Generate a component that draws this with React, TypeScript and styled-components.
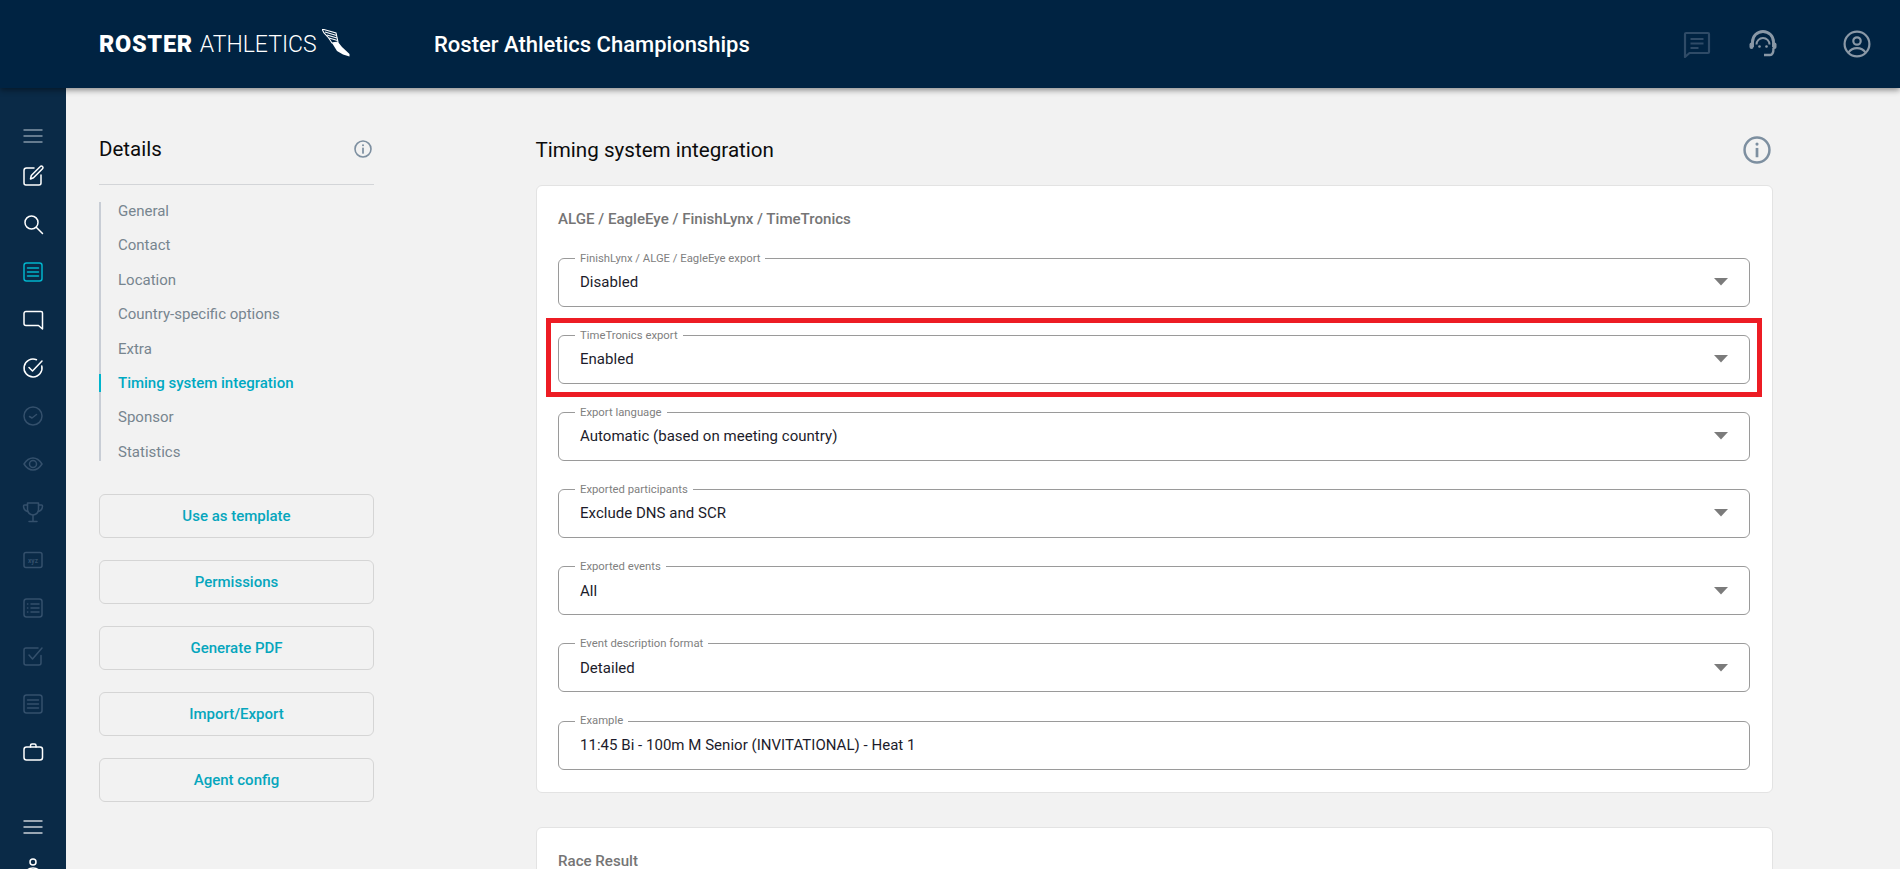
import React from 'react';
import styled, { createGlobalStyle } from 'styled-components';

const dimIcon = '#34506c';

const navItems = ['General', 'Contact', 'Location', 'Country-specific options', 'Extra', 'Timing system integration', 'Sponsor', 'Statistics'];
const sideButtons = ['Use as template', 'Permissions', 'Generate PDF', 'Import/Export', 'Agent config'];

const fields = [
  { label: 'FinishLynx / ALGE / EagleEye export', value: 'Disabled' },
  { label: 'TimeTronics export', value: 'Enabled', marked: true },
  { label: 'Export language', value: 'Automatic (based on meeting country)' },
  { label: 'Exported participants', value: 'Exclude DNS and SCR' },
  { label: 'Exported events', value: 'All' },
  { label: 'Event description format', value: 'Detailed' },
  { label: 'Example', value: '11:45 Bi - 100m M Senior (INVITATIONAL) - Heat 1', plain: true },
];

const Svg = ({ size = 24, children }: { size?: number; children: React.ReactNode }) => (
  <svg width={size} height={size} viewBox="0 0 24 24" fill="none" stroke="currentColor" strokeWidth="1.5" strokeLinecap="round" strokeLinejoin="round">
    {children}
  </svg>
);

const ListBox = () => (
  <Svg>
    <rect x="3" y="3" width="18" height="18" rx="2.5" />
    <path d="M6.5 8h11M6.5 12h11M6.5 16h11" />
  </Svg>
);

const sideIcons = [
  {
    key: 'edit',
    node: (
      <Svg>
        <path d="M13 4H5.5A2.5 2.5 0 0 0 3 6.500V19a2 2 0 0 0 2 2h13a2 2 0 0 0 2-2v-8" />
        <path d="M9.500 15l.8-3.500L19.300 2.500a1.500 1.500 0 0 1 2.200 0 1.500 1.500 0 0 1 0 2.200L12.500 13.800z" />
      </Svg>
    ),
  },
  {
    key: 'search',
    node: (
      <Svg>
        <circle cx="10.500" cy="10.500" r="6.500" />
        <path d="M15.500 15.500L21.500 21.500" />
      </Svg>
    ),
  },
  { key: 'list', active: true, node: <ListBox /> },
  {
    key: 'chat',
    node: (
      <Svg>
        <path d="M5 3.500h15a1.500 1.500 0 0 1 1.500 1.500v16l-4-3.500H5A2 2 0 0 1 3 15.500V5.500a2 2 0 0 1 2-2z" />
      </Svg>
    ),
  },
  {
    key: 'done',
    node: (
      <Svg>
        <path d="M20.800 10a9 9 0 1 1-5.300-6.300" />
        <path d="M8 11.500l3.500 3.500L21 5" />
      </Svg>
    ),
  },
  {
    key: 'time',
    dim: true,
    node: (
      <Svg>
        <circle cx="12" cy="12" r="9" />
        <path d="M8.500 12.500l2.500 1.500 4.500-3.500" />
      </Svg>
    ),
  },
  {
    key: 'eye',
    dim: true,
    node: (
      <Svg>
        <path d="M3 12c2.500-4 5.500-6 9-6s6.500 2 9 6c-2.500 4-5.500 6-9 6s-6.500-2-9-6z" />
        <circle cx="12" cy="12" r="3.500" />
      </Svg>
    ),
  },
  {
    key: 'trophy',
    dim: true,
    node: (
      <Svg>
        <path d="M6.500 3h11v6.500a5.500 5.500 0 0 1-11 0z" />
        <path d="M6.500 5H3.500a1 1 0 0 0-1 1c0 3 1.500 5 4.500 5.500M17.500 5h3a1 1 0 0 1 1 1c0 3-1.500 5-4.500 5.500" />
        <path d="M12 15v6M8 21.500h8" />
      </Svg>
    ),
  },
  {
    key: 'xyz',
    dim: true,
    node: (
      <Svg>
        <rect x="3" y="4.500" width="18" height="15" rx="2" />
        <text x="12" y="14.500" textAnchor="middle" fontSize="6.500" fontWeight="700" fontFamily="Roboto, sans-serif" fill="currentColor" stroke="none">xyz</text>
      </Svg>
    ),
  },
  {
    key: 'bullets',
    dim: true,
    node: (
      <Svg>
        <rect x="3" y="3" width="18" height="18" rx="2.500" />
        <path d="M10 8h8M10 12h8M10 16h8M6.500 8h.3M6.500 12h.3M6.500 16h.3" />
      </Svg>
    ),
  },
  {
    key: 'check',
    dim: true,
    node: (
      <Svg>
        <path d="M20 11.500V19a2 2 0 0 1-2 2H5a2 2 0 0 1-2-2V6a2 2 0 0 1 2-2h12" />
        <path d="M8 11l3.500 4L21 4" />
      </Svg>
    ),
  },
  { key: 'list2', dim: true, node: <ListBox /> },
  {
    key: 'case',
    node: (
      <Svg>
        <rect x="3" y="7" width="18.500" height="13" rx="2.500" />
        <path d="M9.500 7V5.500A1.500 1.500 0 0 1 11 4h2.500A1.500 1.500 0 0 1 15 5.500V7" />
      </Svg>
    ),
  },
];

const Burger = () => (
  <Svg>
    <path d="M2.500 6h19M2.500 12h19M2.500 18h19" strokeLinecap="butt" />
  </Svg>
);

const InfoIcon = ({ size }: { size: number }) => (
  <svg width={size} height={size} viewBox="0 0 27 27" fill="none">
    <circle cx="13.500" cy="13.500" r="12" stroke="currentColor" strokeWidth="2.400" />
    <rect x="12.200" y="11.500" width="2.600" height="9" fill="currentColor" />
    <circle cx="13.500" cy="7.800" r="1.500" fill="currentColor" />
  </svg>
);

const WingLogo = () => (
  <svg width="28" height="28" viewBox="0 0 28 28" fill="none">
    <path d="M0 0L14 4L16 13L10 14L6 8L2 4Z" stroke="#fff" strokeWidth="1.100" />
    <path d="M3 3L14.500 6.500M5 6L15 9M7 9L15.500 11.500" stroke="#fff" strokeWidth="1.100" />
    <path d="M10 14L16 13L20 18L27.500 25L27.500 27.500L21 25.500L15 22Z" fill="#fff" />
  </svg>
);

const Arrow = () => (
  <svg width="14" height="8" viewBox="0 0 14 8">
    <path d="M0 0h14L7 7.500z" fill="#7b7b7b" />
  </svg>
);

export default function App() {
  return (
    <>
      <GlobalStyle />
      <Page>
        <Header>
          <Logo>
            <LogoBold>ROSTER</LogoBold>
            <LogoLight>ATHLETICS</LogoLight>
            <WingLogo />
          </Logo>
          <MeetingName>Roster Athletics Championships</MeetingName>
          <HeaderIcons>
            <HeaderIcon $tone="#2f4b67" $gap={0}>
              <svg width="28" height="28" viewBox="0 0 28 28" fill="none" stroke="currentColor" strokeWidth="2.200">
                <path d="M3 3h22a1 1 0 0 1 1 1v18a1 1 0 0 1-1 1H6.500L2 27V4a1 1 0 0 1 1-1z" strokeLinejoin="round" />
                <path d="M7.500 9h13M7.500 13.500h13M7.500 18h8" />
              </svg>
            </HeaderIcon>
            <HeaderIcon $tone="#8a98a6" $gap={38}>
              <svg width="28" height="28" viewBox="0 0 28 28" fill="none" stroke="currentColor">
                <path d="M3.500 17v-5a10.500 10.500 0 0 1 21 0v5" strokeWidth="2.900" />
                <path d="M7.500 14.500a6.500 6.500 0 0 1 13 0" strokeWidth="2" />
                <rect x="0.500" y="12.500" width="4" height="6.500" rx="2" fill="currentColor" stroke="none" />
                <rect x="23.500" y="12.500" width="4" height="6.500" rx="2" fill="currentColor" stroke="none" />
                <path d="M24.500 18c0 5-1.500 7-3.500 7h-6" strokeWidth="2.400" />
                <circle cx="10.500" cy="16.500" r="1.300" fill="currentColor" stroke="none" />
                <circle cx="17.500" cy="16.500" r="1.300" fill="currentColor" stroke="none" />
              </svg>
            </HeaderIcon>
            <HeaderIcon $tone="#8a98a6" $gap={66}>
              <svg width="28" height="28" viewBox="0 0 28 28" fill="none" stroke="currentColor" strokeWidth="2.200">
                <circle cx="14" cy="14" r="12.400" />
                <circle cx="14" cy="11" r="3.700" />
                <path d="M5.500 22.500c2-3 5-4.300 8.500-4.300s6.500 1.300 8.500 4.300" />
              </svg>
            </HeaderIcon>
          </HeaderIcons>
        </Header>

        <Body>
          <Sidebar>
            <SideSlot $h={32} $tone="#8496a8">
              <Burger />
            </SideSlot>
            {sideIcons.map((icon) => (
              <SideSlot key={icon.key} $h={48} $tone={icon.active ? '#00b4cc' : icon.dim ? dimIcon : '#ffffff'}>
                {icon.node}
              </SideSlot>
            ))}
            <SideSpacer />
            <SideSlot $h={32} $tone="#c9d0d7">
              <Burger />
            </SideSlot>
            <SideSlot $h={48} $tone="#ffffff">
              <Svg>
                <circle cx="12" cy="7" r="3" />
                <path d="M5 20c0-5 3-7 7-7s7 2 7 7z" />
              </Svg>
            </SideSlot>
          </Sidebar>

          <Content>
            <DetailsColumn>
              <DetailsHead>
                <DetailsTitle>Details</DetailsTitle>
                <InfoWrap>
                  <InfoIcon size={18} />
                </InfoWrap>
              </DetailsHead>
              <DetailsNav>
                {navItems.map((item) => (
                  <NavItem key={item} $active={item === 'Timing system integration'}>
                    {item}
                  </NavItem>
                ))}
              </DetailsNav>
              <ButtonStack>
                {sideButtons.map((label) => (
                  <SideButton key={label}>{label}</SideButton>
                ))}
              </ButtonStack>
            </DetailsColumn>

            <MainColumn>
              <MainHead>
                <MainTitle>Timing system integration</MainTitle>
                <InfoWrap>
                  <InfoIcon size={28} />
                </InfoWrap>
              </MainHead>
              <Card>
                <CardHeading>ALGE / EagleEye / FinishLynx / TimeTronics</CardHeading>
                <FieldList>
                  {fields.map((field) => (
                    <FieldWrap key={field.label}>
                      <Field>
                        <FieldLabel>{field.label}</FieldLabel>
                        <FieldValue>{field.value}</FieldValue>
                        {!field.plain && <Arrow />}
                      </Field>
                      {field.marked && <RedMark />}
                    </FieldWrap>
                  ))}
                </FieldList>
              </Card>
              <NextCard>
                <CardHeading>Race Result</CardHeading>
              </NextCard>
            </MainColumn>
          </Content>
        </Body>
      </Page>
    </>
  );
}

const GlobalStyle = createGlobalStyle`
  html, body, #root {
    height: 100%;
    margin: 0;
  }
  body {
    overflow: hidden;
    background: #f2f2f2;
    font-family: Roboto, "Liberation Sans", sans-serif;
  }
  * {
    box-sizing: border-box;
  }
`;

const Page = styled.div`
  height: 869px;
  display: flex;
  flex-direction: column;
  overflow: hidden;
`;

const Header = styled.header`
  position: relative;
  z-index: 2;
  flex: 0 0 88px;
  display: flex;
  align-items: center;
  padding-left: 99px;
  background: #002342;
  box-shadow: 0 2px 6px rgba(0, 0, 0, 0.45);
`;

const Logo = styled.div`
  display: flex;
  align-items: center;
  width: 335px;
  color: #fff;
  svg {
    margin-left: 5px;
    margin-top: -3px;
  }
`;

const LogoBold = styled.span`
  font-size: 23.5px;
  font-weight: 900;
  letter-spacing: 0.7px;
`;

const LogoLight = styled.span`
  margin-left: 7px;
  font-size: 23px;
  font-weight: 300;
`;

const MeetingName = styled.div`
  font-size: 22px;
  font-weight: 500;
  color: #fff;
`;

const HeaderIcons = styled.div`
  margin-left: auto;
  display: flex;
  align-items: center;
  padding-right: 29px;
`;

const HeaderIcon = styled.div<{ $tone: string; $gap: number }>`
  display: flex;
  color: ${(p) => p.$tone};
  margin-left: ${(p) => p.$gap}px;
`;

const Body = styled.div`
  flex: 1;
  display: flex;
  min-height: 0;
`;

const Sidebar = styled.nav`
  flex: 0 0 66px;
  display: flex;
  flex-direction: column;
  padding-top: 32px;
  background: #0a2a47;
`;

const SideSlot = styled.div<{ $h: number; $tone: string }>`
  flex: 0 0 ${(p) => p.$h}px;
  display: flex;
  align-items: center;
  justify-content: center;
  color: ${(p) => p.$tone};
`;

const SideSpacer = styled.div`
  flex: 0 0 35px;
`;

const Content = styled.div`
  flex: 1;
  display: flex;
  gap: 161.5px;
  padding: 44px 0 0 33px;
  min-width: 0;
`;

const DetailsColumn = styled.aside`
  flex: 0 0 275px;
`;

const DetailsHead = styled.div`
  display: flex;
  align-items: center;
  justify-content: space-between;
  height: 53px;
  padding: 1px 2px 19px 0;
  border-bottom: 1px solid #d3d5d8;
`;

const DetailsTitle = styled.h2`
  margin: 0;
  font-size: 20.5px;
  font-weight: 400;
  color: #0c0c0c;
`;

const InfoWrap = styled.div`
  display: flex;
  color: #7d8fa0;
`;

const DetailsNav = styled.ul`
  margin: 17px 0 0;
  padding: 0 0 0 17px;
  list-style: none;
  display: flex;
  flex-direction: column;
  gap: 16.4px;
  border-left: 2px solid #c8cdd5;
`;

const NavItem = styled.li<{ $active?: boolean }>`
  position: relative;
  font-size: 15px;
  line-height: 18px;
  font-weight: ${(p) => (p.$active ? 500 : 400)};
  color: ${(p) => (p.$active ? '#00a9c2' : '#77858f')};

  ${(p) =>
    p.$active &&
    `
    &::before {
      content: '';
      position: absolute;
      left: -19px;
      top: 0;
      bottom: 0;
      width: 2px;
      background: #00b4cc;
    }
  `}
`;

const ButtonStack = styled.div`
  margin-top: 33px;
  display: flex;
  flex-direction: column;
  gap: 22px;
`;

const SideButton = styled.button`
  height: 44px;
  border: 1px solid #d5d5d5;
  border-radius: 6px;
  background: transparent;
  font-family: inherit;
  font-size: 15px;
  font-weight: 500;
  color: #06a6bd;
`;

const MainColumn = styled.main`
  flex: 0 0 1237.5px;
`;

const MainHead = styled.div`
  display: flex;
  align-items: center;
  justify-content: space-between;
  height: 34px;
  margin-bottom: 19px;
  padding: 1px 2px 0 0;
`;

const MainTitle = styled.h1`
  margin: 0;
  font-size: 20.6px;
  font-weight: 400;
  color: #0c0c0c;
`;

const Card = styled.section`
  padding: 23px 22px 22px 21.5px;
  background: #fff;
  border: 1px solid #e3e3e3;
  border-radius: 6px;
`;

const NextCard = styled(Card)`
  margin-top: 34px;
  height: 200px;
`;

const CardHeading = styled.h3`
  margin: 0;
  font-size: 15.1px;
  line-height: 20px;
  font-weight: 500;
  color: #757575;
`;

const FieldList = styled.div`
  margin-top: 23.5px;
  display: flex;
  flex-direction: column;
  gap: 22.6px;
`;

const FieldWrap = styled.div`
  position: relative;
`;

const Field = styled.fieldset`
  display: flex;
  align-items: center;
  justify-content: space-between;
  height: 54.5px;
  margin: 0;
  padding: 0 21px 6.2px 21px;
  border: 1px solid #9a9a9a;
  border-radius: 6px;
`;

const FieldLabel = styled.legend`
  margin-left: -5px;
  padding: 0 5px;
  font-size: 11.3px;
  line-height: 12px;
  color: #808080;
`;

const FieldValue = styled.span`
  font-size: 15px;
  letter-spacing: 0.03px;
  color: #1c1c2b;
`;

const RedMark = styled.div`
  position: absolute;
  left: -12px;
  right: -12px;
  top: -11.5px;
  bottom: -12.5px;
  border: 5px solid #ed1c24;
  pointer-events: none;
`;
